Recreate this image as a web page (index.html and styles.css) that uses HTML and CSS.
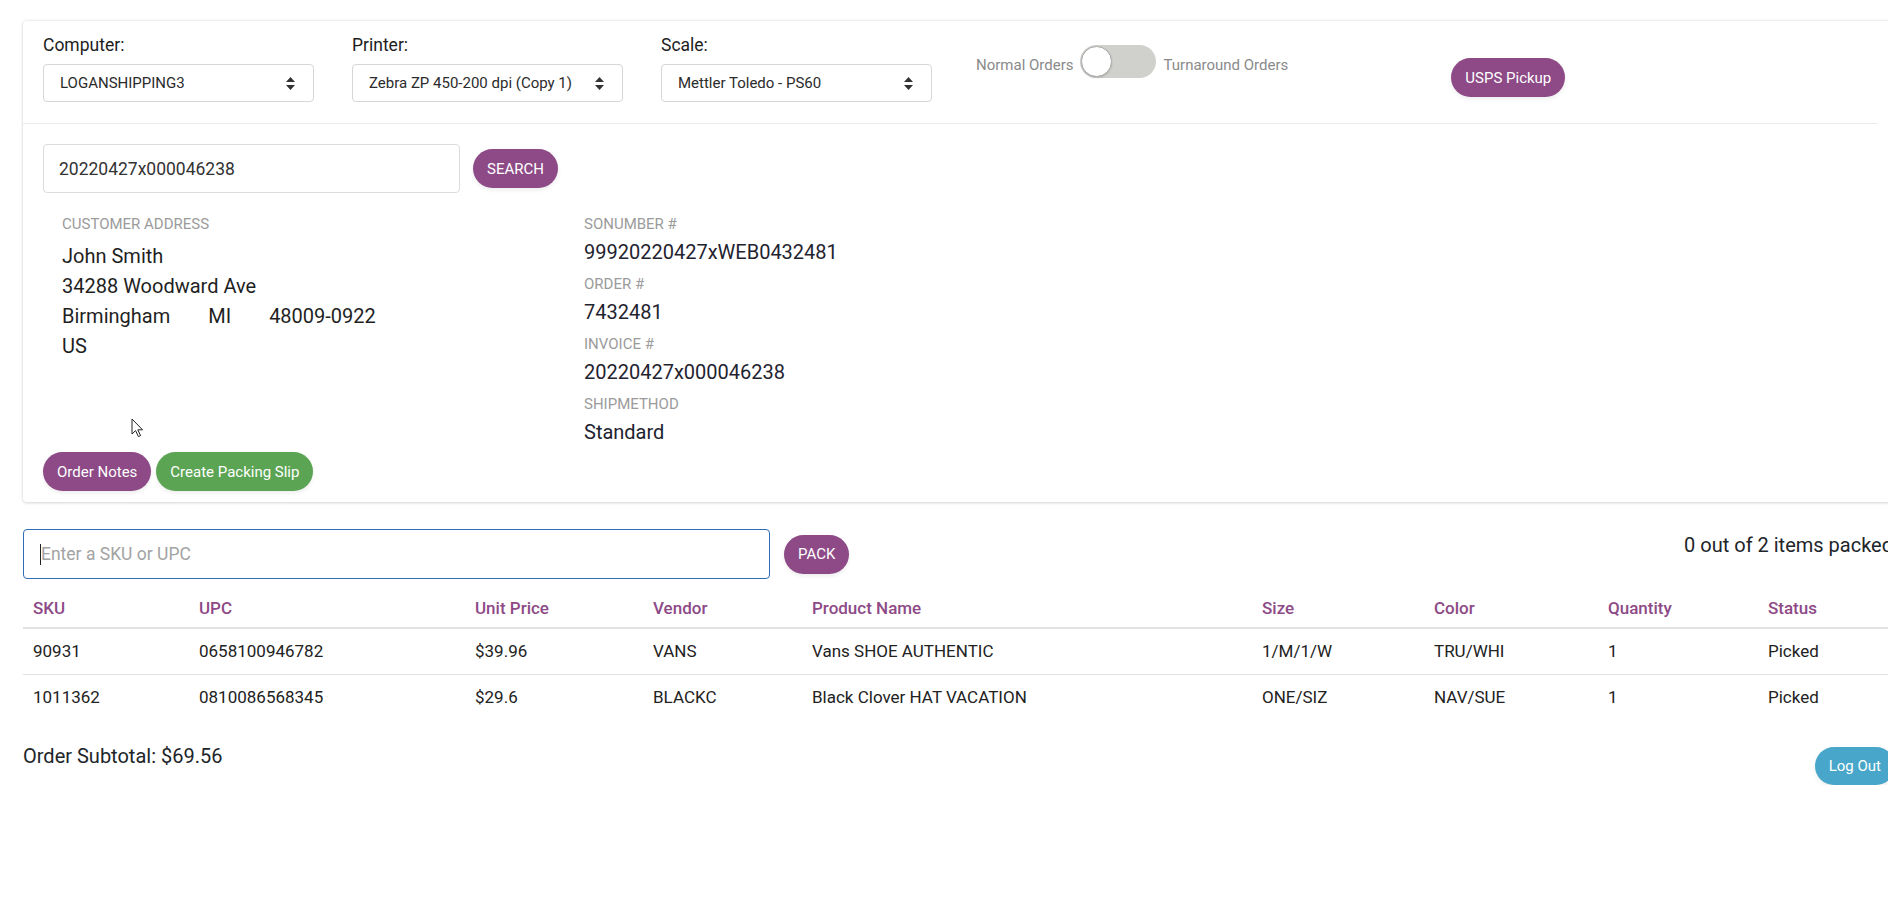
FILE: index.html
```html
<!DOCTYPE html>
<html lang="en">

<head>
	<meta charset="UTF-8">
	<title>Packing Station</title>
	<link rel="stylesheet" href="styles.css">
</head>

<body>
	<div class="page">
		<!-- station settings + order lookup -->
		<div class="card">
			<div class="card-header">
				<div class="field">
					<div class="field-label">Computer:</div>
					<div class="select">
						<span>LOGANSHIPPING3</span>
						<svg width="9" height="13" viewBox="0 0 9 13"><path d="M4.5 0 L9 5 L0 5 Z M0 8 L9 8 L4.5 13 Z" fill="#333"/></svg>
					</div>
				</div>
				<div class="field">
					<div class="field-label">Printer:</div>
					<div class="select">
						<span>Zebra ZP 450-200 dpi (Copy 1)</span>
						<svg width="9" height="13" viewBox="0 0 9 13"><path d="M4.5 0 L9 5 L0 5 Z M0 8 L9 8 L4.5 13 Z" fill="#333"/></svg>
					</div>
				</div>
				<div class="field">
					<div class="field-label">Scale:</div>
					<div class="select">
						<span>Mettler Toledo - PS60</span>
						<svg width="9" height="13" viewBox="0 0 9 13"><path d="M4.5 0 L9 5 L0 5 Z M0 8 L9 8 L4.5 13 Z" fill="#333"/></svg>
					</div>
				</div>
				<div class="toggle-group">
					<span class="toggle-text">Normal Orders</span>
					<div class="toggle"><div class="knob"></div></div>
					<span class="toggle-text">Turnaround Orders</span>
				</div>
				<a href="#" class="btn btn-purple usps">USPS Pickup</a>
			</div>

			<div class="card-body">
				<div class="search-row">
					<input class="search-input" type="text" value="20220427x000046238">
					<a href="#" class="btn btn-purple">SEARCH</a>
				</div>

				<div class="info">
					<div class="address">
						<div class="info-label">CUSTOMER ADDRESS</div>
						<div class="address-lines">
							<div>John Smith</div>
							<div>34288 Woodward Ave</div>
							<div><span class="gap">Birmingham</span><span class="gap">MI</span><span>48009-0922</span></div>
							<div>US</div>
						</div>
					</div>
					<div class="order-meta">
						<div class="info-label">SONUMBER #</div>
						<div class="info-value">99920220427xWEB0432481</div>
						<div class="info-label">ORDER #</div>
						<div class="info-value">7432481</div>
						<div class="info-label">INVOICE #</div>
						<div class="info-value">20220427x000046238</div>
						<div class="info-label">SHIPMETHOD</div>
						<div class="info-value">Standard</div>
					</div>
				</div>

				<div class="card-actions">
					<a href="#" class="btn btn-purple">Order Notes</a>
					<a href="#" class="btn btn-green">Create Packing Slip</a>
				</div>
			</div>

			<!-- mouse pointer in the capture -->
			<svg class="pointer" width="13" height="20" viewBox="0 0 13 20"><path d="M1 1 L1 16 L4.6 12.6 L7.4 18.6 L9.6 17.6 L6.8 11.8 L11.5 11.8 Z" fill="#fff" stroke="#222" stroke-width="1" stroke-linejoin="round"/></svg>
		</div>

		<!-- pack items -->
		<div class="pack-row">
			<div class="sku-wrap">
				<input class="sku-input" type="text" placeholder="Enter a SKU or UPC">
				<span class="caret"></span>
			</div>
			<a href="#" class="btn btn-purple">PACK</a>
			<div class="packed-count">0 out of 2 items packed</div>
		</div>

		<table class="items">
			<colgroup>
				<col style="width: 166px">
				<col style="width: 276px">
				<col style="width: 178px">
				<col style="width: 159px">
				<col style="width: 450px">
				<col style="width: 172px">
				<col style="width: 174px">
				<col style="width: 160px">
				<col>
			</colgroup>
			<thead>
				<tr>
					<th>SKU</th>
					<th>UPC</th>
					<th>Unit Price</th>
					<th>Vendor</th>
					<th>Product Name</th>
					<th>Size</th>
					<th>Color</th>
					<th>Quantity</th>
					<th>Status</th>
				</tr>
			</thead>
			<tbody>
				<tr>
					<td>90931</td>
					<td>0658100946782</td>
					<td>$39.96</td>
					<td>VANS</td>
					<td>Vans SHOE AUTHENTIC</td>
					<td>1/M/1/W</td>
					<td>TRU/WHI</td>
					<td>1</td>
					<td>Picked</td>
				</tr>
				<tr>
					<td>1011362</td>
					<td>0810086568345</td>
					<td>$29.6</td>
					<td>BLACKC</td>
					<td>Black Clover HAT VACATION</td>
					<td>ONE/SIZ</td>
					<td>NAV/SUE</td>
					<td>1</td>
					<td>Picked</td>
				</tr>
			</tbody>
		</table>

		<div class="footer-row">
			<div class="subtotal">Order Subtotal: $69.56</div>
			<a href="#" class="btn btn-blue logout">Log Out</a>
		</div>
	</div>
</body>

</html>
```

FILE: styles.css
```css
/* reset */
* {
	margin: 0;
	padding: 0;
	box-sizing: border-box;
}

html,
body {
	overflow: hidden;
}

body {
	font-family: Roboto, "Liberation Sans", sans-serif;
	color: #212529;
	background: #fff;
}

a {
	text-decoration: none;
}

/* page is wider than the window, right side gets cut */
.page {
	width: 1903px;
	padding: 21px 0 0 23px;
}

/* buttons */
.btn {
	display: inline-flex;
	align-items: center;
	height: 39px;
	padding: 0 14px;
	border-radius: 20px;
	font-size: 15px;
	font-weight: 400;
	color: #fff;
	white-space: nowrap;
	box-shadow: 0 2px 4px rgba(0, 0, 0, 0.08);
}

.btn-purple {
	background-color: #8d4a86;
}

.btn-green {
	background-color: #5ba454;
}

.btn-blue {
	background-color: #47a6c9;
}

/* card */
.card {
	position: relative;
	border-radius: 4px;
	box-shadow: 0 0 3px rgba(0, 0, 0, 0.18), 0 2px 3px rgba(0, 0, 0, 0.06);
}

.card-header {
	display: flex;
	align-items: flex-start;
	padding: 14px 0 21px 20px;
	margin-right: 25px;
	border-bottom: 1px solid #ececec;
}

.field {
	width: 271px;
}

.field + .field {
	margin-left: 38px;
}

.field-label {
	font-size: 17.5px;
	line-height: 21px;
	color: #1d1d1d;
	margin-bottom: 8px;
}

.select {
	height: 38px;
	display: flex;
	align-items: center;
	justify-content: space-between;
	padding: 0 18px 0 16px;
	border: 1px solid #d6d6d6;
	border-radius: 4px;
	font-size: 15px;
	color: #2b2b2b;
}

.toggle-group {
	display: flex;
	align-items: center;
	margin-left: 44px;
	margin-top: 10px;
}

.toggle-text {
	font-size: 15px;
	color: #8a8a8a;
	margin-top: 6px;
}

.toggle {
	width: 76px;
	height: 33px;
	margin: 0 8px 0 6px;
	border-radius: 17px;
	background-color: #d0d0cc;
	display: flex;
	align-items: center;
	padding-left: 1px;
}

.knob {
	width: 31px;
	height: 31px;
	border-radius: 50%;
	background-color: #fff;
	border: 1px solid #a9a9a9;
	box-shadow: 0 1px 2px rgba(0, 0, 0, 0.15);
}

.usps {
	margin-left: 163px;
	margin-top: 23px;
}

.card-body {
	padding: 20px 0 11px 20px;
}

.search-row {
	display: flex;
	align-items: center;
}

.search-input {
	width: 417px;
	height: 49px;
	padding: 0 15px;
	border: 1px solid #dcdcdc;
	border-radius: 4px;
	font-family: inherit;
	font-size: 17.5px;
	color: #333;
	outline: none;
	margin-right: 13px;
}

.info {
	display: flex;
	margin-top: 22px;
}

.address {
	width: 541px;
	padding-left: 19px;
}

.info-label {
	font-size: 15px;
	line-height: 18px;
	color: #9b9b9b;
}

.address-lines {
	margin-top: 8px;
	font-size: 20px;
	line-height: 30px;
	color: #1f1f1f;
}

.gap {
	margin-right: 38px;
}

.order-meta .info-value {
	font-size: 20px;
	line-height: 24px;
	margin: 7px 0 11px;
	color: #1f2330;
}

.order-meta .info-value:last-child {
	margin-bottom: 0;
}

.card-actions {
	display: flex;
	gap: 5px;
	margin-top: 8px;
}

.pointer {
	position: absolute;
	left: 108px;
	top: 397px;
}

/* pack row */
.pack-row {
	display: flex;
	align-items: center;
	margin-top: 27px;
}

.sku-wrap {
	position: relative;
	margin-right: 14px;
}

.sku-input {
	width: 747px;
	height: 50px;
	padding: 0 17px;
	border: 1px solid #2f6db5;
	border-radius: 4px;
	font-family: inherit;
	font-size: 17.5px;
	outline: none;
}

.sku-input::placeholder {
	color: #a3a3a3;
}

.caret {
	position: absolute;
	left: 17px;
	top: 15px;
	width: 1px;
	height: 21px;
	background-color: #222;
}

.packed-count {
	margin-left: auto;
	margin-right: 10px;
	align-self: flex-start;
	margin-top: 4px;
	font-size: 20px;
	line-height: 24px;
	white-space: nowrap;
}

/* items table */
.items {
	width: 100%;
	margin-top: 10px;
	border-collapse: collapse;
	table-layout: fixed;
	font-size: 17px;
}

.items th {
	text-align: left;
	font-weight: 500;
	color: #8d4a86;
	padding: 9px 10px;
	line-height: 20px;
	border-bottom: 2px solid #e2e2e2;
}

.items td {
	padding: 12px 10px 13px;
	line-height: 20px;
	white-space: nowrap;
	color: #222;
}

.items tbody tr:first-child td {
	border-bottom: 1px solid #e2e2e2;
}

.footer-row {
	display: flex;
	align-items: flex-start;
	margin-top: 24px;
}

.subtotal {
	font-size: 20px;
	line-height: 24px;
}

.logout {
	margin-left: auto;
	margin-right: 8px;
	margin-top: 3px;
	height: 38px;
}
```
